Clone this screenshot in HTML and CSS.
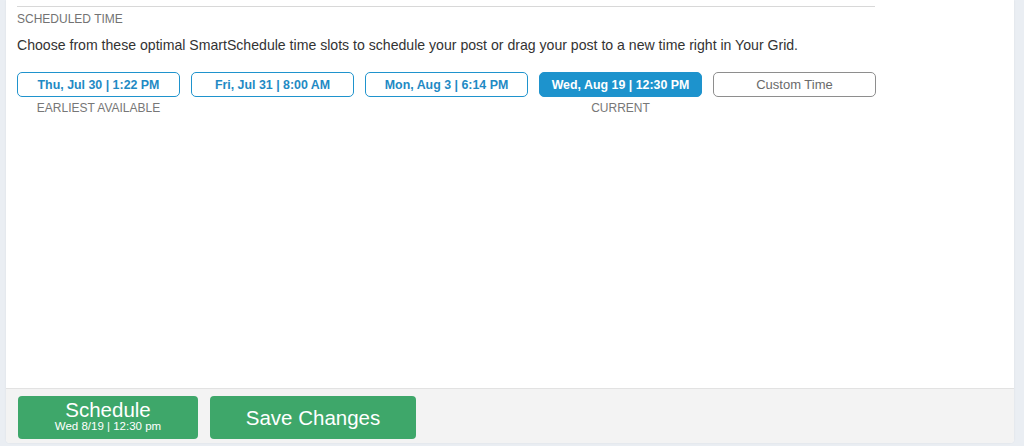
FILE: index.html
```html
<!DOCTYPE html>
<html lang="en">

<head>
  <meta charset="UTF-8">
  <meta name="viewport" content="width=device-width, initial-scale=1.0">
  <title>Scheduled Time</title>
  <link rel="stylesheet" href="styles.css">
</head>

<body>
  <div class="panel">
    <div class="content">
      <hr class="divider">
      <div class="section-title">Scheduled Time</div>
      <p class="hint">Choose from these optimal SmartSchedule time slots to schedule your post or drag your post to a new time right in Your Grid.</p>
      <div class="slots">
        <div class="slot">
          <button class="slot-btn">Thu, Jul 30 | 1:22 PM</button>
          <div class="slot-label">Earliest Available</div>
        </div>
        <div class="slot">
          <button class="slot-btn">Fri, Jul 31 | 8:00 AM</button>
        </div>
        <div class="slot">
          <button class="slot-btn">Mon, Aug 3 | 6:14 PM</button>
        </div>
        <div class="slot">
          <button class="slot-btn active">Wed, Aug 19 | 12:30 PM</button>
          <div class="slot-label">Current</div>
        </div>
        <div class="slot">
          <button class="slot-btn custom">Custom Time</button>
        </div>
      </div>
    </div>

    <div class="footer">
      <button class="btn-green schedule">
        Schedule
        <span class="sub">Wed 8/19 | 12:30 pm</span>
      </button>
      <button class="btn-green save">Save Changes</button>
    </div>
  </div>
</body>

</html>
```

FILE: styles.css
```css
html,
body {
  height: 100%;
}

body {
  margin: 0;
  padding: 0 10px 0 6px;
  background: #eaeef3;
  font-family: "Liberation Sans", Arial, sans-serif;
  box-sizing: border-box;
  overflow: hidden;
}

.panel {
  height: 443px;
  background: #fff;
  border-radius: 0 0 4px 4px;
  display: flex;
  flex-direction: column;
  box-shadow: 0 0 2px rgba(0, 0, 0, 0.08);
  overflow: hidden;
}

.content {
  flex: 1;
  padding: 0 0 0 11px;
}

.divider {
  width: 858px;
  margin: 6px 0 0;
  border: none;
  border-top: 1px solid #d8d8d8;
}

.section-title {
  margin-top: 5px;
  font-size: 12px;
  color: #737373;
  text-transform: uppercase;
  line-height: 14px;
}

.hint {
  margin: 11px 0 0;
  font-size: 14.1px;
  color: #333;
  line-height: 17px;
}

.slots {
  display: flex;
  gap: 11px;
  margin-top: 18px;
}

.slot {
  width: 163px;
  text-align: center;
}

.slot-btn {
  width: 100%;
  height: 25px;
  padding: 0;
  border: 1px solid #1f93cd;
  border-radius: 5px;
  background: #fff;
  color: #1f8ac4;
  font-family: inherit;
  font-size: 12.4px;
  font-weight: bold;
}

.slot-btn.active {
  background: #1d93cd;
  color: #fff;
}

.slot-btn.custom {
  border-color: #8e8e8e;
  color: #6a6a6a;
  font-size: 13px;
  font-weight: normal;
}

.slot-label {
  margin-top: 4px;
  font-size: 12px;
  color: #777;
  text-transform: uppercase;
  line-height: 14px;
}

.footer {
  height: 55px;
  border-top: 1px solid #e2e2e2;
  background: #f3f3f3;
  display: flex;
  gap: 12px;
  padding: 7px 0 0 12px;
  box-sizing: border-box;
  flex: none;
}

.btn-green {
  height: 43px;
  border: none;
  border-radius: 4px;
  background: #3ea76a;
  color: #fff;
  font-family: inherit;
  padding: 0;
}

.schedule {
  width: 180px;
  font-size: 20.5px;
  line-height: 20px;
  padding-bottom: 2px;
}

.schedule .sub {
  display: block;
  font-size: 11.5px;
  line-height: 13px;
}

.save {
  width: 206px;
  font-size: 20.5px;
}
```
